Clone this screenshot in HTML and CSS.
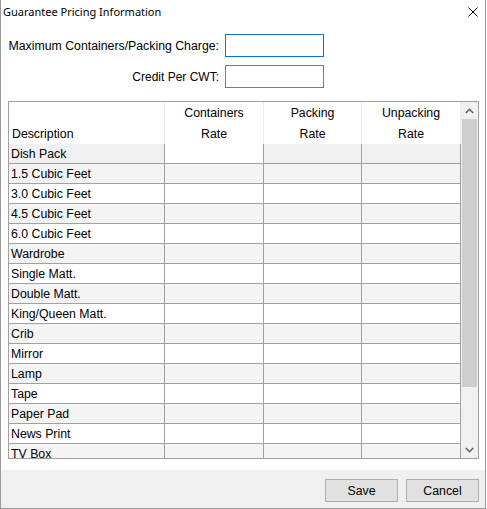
FILE: index.html
```html
<!DOCTYPE html>
<html lang="en">
<head>
  <meta charset="UTF-8" />
  <title>Guarantee Pricing Information</title>
  <link rel="stylesheet" href="styles.css">
</head>
<body>
  <div class="window">
    <div class="titlebar">
      <span class="title">Guarantee Pricing Information</span>
      <svg class="close" width="10" height="10" viewBox="0 0 10 10">
        <path d="M0.5 0.5 L9.5 9.5 M9.5 0.5 L0.5 9.5" stroke="#000" stroke-width="1" fill="none" />
      </svg>
    </div>

    <div class="form">
      <label>Maximum Containers/Packing Charge:</label>
      <input type="text" class="focused" />
      <label class="short">Credit Per CWT:</label>
      <input type="text" />
    </div>

    <div class="grid">
      <div class="table">
        <div class="row head">
          <div class="cell desc">Description</div>
          <div class="cell">Containers<br>Rate</div>
          <div class="cell">Packing<br>Rate</div>
          <div class="cell">Unpacking<br>Rate</div>
        </div>
        <div class="row current">
          <div class="cell desc">Dish Pack</div>
          <div class="cell active"></div>
          <div class="cell"></div>
          <div class="cell"></div>
        </div>
        <div class="row alt"><div class="cell desc">1.5 Cubic Feet</div><div class="cell"></div><div class="cell"></div><div class="cell"></div></div>
        <div class="row"><div class="cell desc">3.0 Cubic Feet</div><div class="cell"></div><div class="cell"></div><div class="cell"></div></div>
        <div class="row alt"><div class="cell desc">4.5 Cubic Feet</div><div class="cell"></div><div class="cell"></div><div class="cell"></div></div>
        <div class="row"><div class="cell desc">6.0 Cubic Feet</div><div class="cell"></div><div class="cell"></div><div class="cell"></div></div>
        <div class="row alt"><div class="cell desc">Wardrobe</div><div class="cell"></div><div class="cell"></div><div class="cell"></div></div>
        <div class="row"><div class="cell desc">Single Matt.</div><div class="cell"></div><div class="cell"></div><div class="cell"></div></div>
        <div class="row alt"><div class="cell desc">Double Matt.</div><div class="cell"></div><div class="cell"></div><div class="cell"></div></div>
        <div class="row"><div class="cell desc">King/Queen Matt.</div><div class="cell"></div><div class="cell"></div><div class="cell"></div></div>
        <div class="row alt"><div class="cell desc">Crib</div><div class="cell"></div><div class="cell"></div><div class="cell"></div></div>
        <div class="row"><div class="cell desc">Mirror</div><div class="cell"></div><div class="cell"></div><div class="cell"></div></div>
        <div class="row alt"><div class="cell desc">Lamp</div><div class="cell"></div><div class="cell"></div><div class="cell"></div></div>
        <div class="row"><div class="cell desc">Tape</div><div class="cell"></div><div class="cell"></div><div class="cell"></div></div>
        <div class="row alt"><div class="cell desc">Paper Pad</div><div class="cell"></div><div class="cell"></div><div class="cell"></div></div>
        <div class="row"><div class="cell desc">News Print</div><div class="cell"></div><div class="cell"></div><div class="cell"></div></div>
        <div class="row alt"><div class="cell desc">TV Box</div><div class="cell"></div><div class="cell"></div><div class="cell"></div></div>
      </div>
      <div class="scrollbar">
        <div class="arrow">
          <svg width="9" height="6" viewBox="0 0 9 6"><path d="M0.8 5 L4.5 1.3 L8.2 5" stroke="#606060" stroke-width="1.6" fill="none" /></svg>
        </div>
        <div class="track">
          <div class="thumb"></div>
        </div>
        <div class="arrow">
          <svg width="9" height="6" viewBox="0 0 9 6"><path d="M0.8 1 L4.5 4.7 L8.2 1" stroke="#606060" stroke-width="1.6" fill="none" /></svg>
        </div>
      </div>
    </div>

    <div class="footer">
      <button>Save</button>
      <button>Cancel</button>
    </div>
  </div>
</body>
</html>
```

FILE: styles.css
```css
body { margin: 0; font-family: "Liberation Sans", Arial, sans-serif; font-size: 12.3px; color: #000; background: #fff; }
.window { width: 486px; height: 509px; box-sizing: border-box; border: 1px solid #999; border-top: none; display: flex; flex-direction: column; background: #fff; }

.titlebar { height: 22px; display: flex; align-items: center; justify-content: space-between; padding: 0 7px 0 2px; }
.title { font-family: "Noto Sans", "Liberation Sans", sans-serif; font-size: 11px; }
.close { margin-top: 1px; }

.form { display: grid; grid-template-columns: 218px 99px; column-gap: 6px; row-gap: 8px; margin-top: 12px; align-items: center; }
.form label { text-align: right; }
.form label.short { font-size: 12px; }
.form input { width: 99px; height: 23px; box-sizing: border-box; border: 1px solid #7a7a7a; margin: 0; padding: 0 3px; font: inherit; outline: none; }
.form input.focused { border-color: #0078d7; }

.grid { margin: 13px 0 0 7px; width: 471px; height: 358px; box-sizing: border-box; border: 1px solid #a0a0a0; display: flex; }
.table { width: 452px; overflow: hidden; }
.row { display: grid; grid-template-columns: 156px 99px 98px 99px; height: 20px; }
.cell { box-sizing: border-box; border-right: 1px solid #a0a0a0; border-bottom: 1px solid #a0a0a0; line-height: 20px; padding-left: 2px; white-space: nowrap; overflow: hidden; }
.row.alt .cell { background: #f4f4f4; }
.row.current .cell { background: #f0f0f0; }
.row.current .cell.active { background: #fff; }

.row.head { height: 42px; }
.row.head .cell { border-bottom: none; border-right-color: #ececec; background: #fff; line-height: 21px; padding-top: 1px; text-align: center; padding-left: 0; }
.row.head .cell.desc { text-align: left; padding-left: 3px; padding-top: 22px; }

.scrollbar { width: 17px; background: #f0f0f0; display: flex; flex-direction: column; }
.arrow { height: 17px; display: flex; align-items: center; justify-content: center; }
.track { flex: 1; }
.thumb { margin: 0 1px; height: 268px; background: #cdcdcd; }

.footer { margin-top: auto; height: 38px; background: #f0f0f0; display: flex; justify-content: flex-end; align-items: flex-start; gap: 8px; padding: 9px 6px 0 0; box-sizing: border-box; }
.footer button { width: 73px; height: 23px; background: #e1e1e1; border: 1px solid #adadad; font: inherit; color: #000; padding: 0; }
```
